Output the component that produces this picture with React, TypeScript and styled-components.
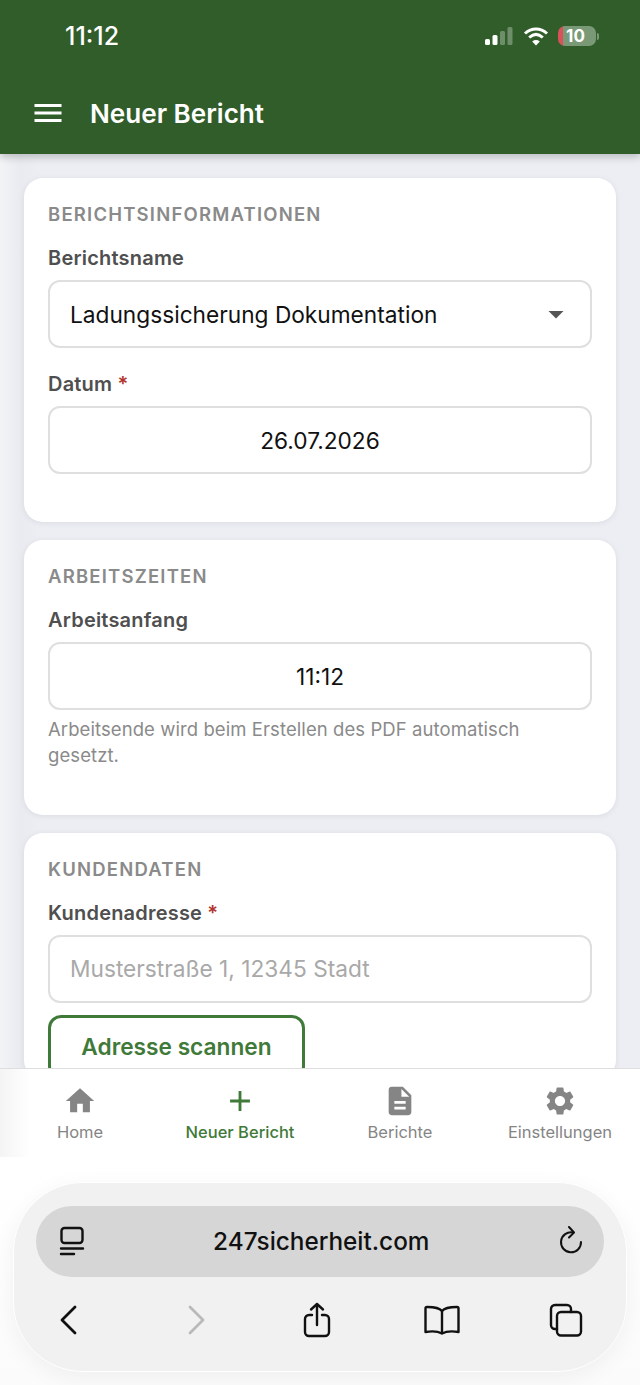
import styled, { createGlobalStyle } from "styled-components";
import { MdAdd, MdArrowDropDown, MdDescription, MdHome, MdMenu, MdSettings } from "react-icons/md";

const GlobalStyle = createGlobalStyle`
  html, body {
    margin: 0;
    padding: 0;
    background: #ffffff;
  }
  * {
    box-sizing: border-box;
  }
`;

const Screen = styled.div`
  color: #111111;
  display: flex;
  flex-direction: column;
  font-family: Inter, "Liberation Sans", sans-serif;
  height: 1385px;
  overflow: hidden;
  width: 640px;
`;

const Header = styled.header`
  background: #305d2a;
  box-shadow: 0 3px 8px rgba(0, 0, 0, 0.22);
  color: #ffffff;
  display: flex;
  flex: none;
  flex-direction: column;
  height: 154px;
  position: relative;
  z-index: 2;
`;

const StatusBar = styled.div`
  align-items: center;
  display: flex;
  height: 72px;
  justify-content: space-between;
  padding: 0 44px 0 65px;
`;

const Clock = styled.span`
  font-size: 25px;
  font-weight: 500;
`;

const StatusIcons = styled.div`
  align-items: center;
  display: flex;
  gap: 9px;
`;

const Battery = styled.div`
  align-items: center;
  background: linear-gradient(90deg, #d9525a 0 5px, #7a9a77 5px);
  border-radius: 7px;
  color: #ffffff;
  display: flex;
  font-size: 17px;
  font-weight: 700;
  height: 20px;
  justify-content: center;
  padding-right: 3px;
  position: relative;
  width: 38px;

  &::after {
    background: #7a9a77;
    border-radius: 0 2px 2px 0;
    content: "";
    height: 7px;
    position: absolute;
    right: -3px;
    top: 6.5px;
    width: 2px;
  }
`;

const TitleRow = styled.div`
  align-items: center;
  display: flex;
  gap: 28px;
  height: 82px;
  padding: 0 0 0 34px;
`;

const MenuIcon = styled(MdMenu)`
  flex: none;
  margin: 0 -4px;
`;

const Title = styled.h1`
  font-size: 26.1px;
  font-weight: 600;
  margin: 0;
`;

const Main = styled.main`
  background: linear-gradient(90deg, #f3f4f6 0, #e9ebf0 20px, #eceef3 40px);
  display: flex;
  flex: 1;
  flex-direction: column;
  gap: 18px;
  min-height: 0;
  overflow: hidden;
  padding: 24px 24px 0;
`;

const Card = styled.section<{ $height?: number }>`
  background: #ffffff;
  border-radius: 19px;
  box-shadow: 0 1px 6px rgba(0, 0, 0, 0.08);
  display: flex;
  flex: none;
  flex-direction: column;
  height: ${(p) => (p.$height ? `${p.$height}px` : "auto")};
  padding: 25px 24px 0;
`;

const CardTitle = styled.h2`
  color: #8a8a8a;
  font-size: 18.5px;
  font-weight: 600;
  letter-spacing: 1.2px;
  line-height: 23px;
  margin: 0 0 21px;
  text-transform: uppercase;
`;

const Label = styled.div`
  color: #4f4f4f;
  font-size: 20px;
  font-weight: 600;
  letter-spacing: 0.2px;
  line-height: 23px;
  margin-bottom: 10px;
`;

const Required = styled.span`
  color: #b3322d;
`;

const Field = styled.div<{ $center?: boolean; $bottom?: number }>`
  align-items: center;
  border: 2px solid #dfdfdf;
  border-radius: 12px;
  display: flex;
  flex: none;
  font-size: 22.7px;
  height: 68px;
  justify-content: ${(p) => (p.$center ? "center" : "space-between")};
  margin-bottom: ${(p) => p.$bottom ?? 0}px;
  padding: 0 20px;
`;

const FieldCaret = styled(MdArrowDropDown)`
  color: #555555;
  margin-right: -4px;
`;

const Placeholder = styled.span`
  color: #a9a9a9;
`;

const Hint = styled.p`
  color: #8a8a8a;
  font-size: 18.5px;
  letter-spacing: 0.08px;
  line-height: 26px;
  margin: 6px 0 0;
`;

const ScanButton = styled.button`
  background: #ffffff;
  border: 3px solid #3f7a39;
  border-radius: 13px;
  color: #3f7a39;
  flex: none;
  font-family: inherit;
  font-size: 22.7px;
  font-weight: 600;
  height: 64px;
  margin-top: 12px;
  padding: 0;
  width: 257px;
`;

const BottomNav = styled.nav`
  background: linear-gradient(90deg, #f4f4f4 0, #ffffff 30px);
  border-top: 1px solid #dedede;
  display: grid;
  flex: none;
  grid-template-columns: repeat(4, 1fr);
  height: 89px;
  position: relative;
  z-index: 2;
`;

const NavItem = styled.div<{ $active?: boolean }>`
  align-items: center;
  color: ${(p) => (p.$active ? "#3f7a39" : "#858585")};
  display: flex;
  flex-direction: column;
  font-size: 16.5px;
  font-weight: ${(p) => (p.$active ? 500 : 400)};
  gap: 4px;
  padding-top: 15px;
  white-space: nowrap;
`;

const BrowserArea = styled.div`
  background: linear-gradient(#ffffff, #fbfbfb);
  flex: none;
  height: 228px;
  padding: 25px 13px 13px 12.5px;
`;

const BrowserPanel = styled.div`
  background: #f1f1f1;
  border: 1.5px solid #ffffff;
  border-radius: 70px;
  box-shadow: 0 6px 22px rgba(0, 0, 0, 0.05);
  display: flex;
  flex-direction: column;
  height: 190px;
  padding: 22.5px 22px 0;
`;

const UrlBar = styled.div`
  align-items: center;
  background: #d6d6d6;
  border-radius: 36px;
  display: flex;
  flex: none;
  font-size: 24.3px;
  font-weight: 500;
  height: 71px;
  justify-content: space-between;
  padding: 0 20px 0 23px;
`;

const BrowserTools = styled.div`
  align-items: center;
  display: flex;
  height: 86px;
  justify-content: space-between;
  padding: 0 18px 0 13px;
`;

const ToolSlot = styled.div<{ $muted?: boolean }>`
  color: ${(p) => (p.$muted ? "#b9b9b9" : "#111111")};
  display: flex;
  justify-content: center;
  width: 40px;
`;

const Glyph = styled.svg`
  display: block;
  fill: none;
  stroke: currentColor;
  stroke-linecap: round;
  stroke-linejoin: round;
`;

export default function App() {
  return (
    <>
      <GlobalStyle />
      <Screen>
        <Header>
          <StatusBar>
            <Clock>11:12</Clock>
            <StatusIcons>
              <svg width="30" height="20" viewBox="0 0 30 20" fill="#ffffff">
                <rect x="1" y="13" width="5" height="6" rx="1.5" />
                <rect x="8.5" y="9" width="5" height="10" rx="1.5" />
                <rect x="16" y="5" width="5" height="14" rx="1.5" opacity="0.3" />
                <rect x="23.5" y="1" width="5" height="18" rx="1.5" opacity="0.3" />
              </svg>
              <svg width="26" height="20" viewBox="0 0 26 20" fill="none" stroke="#ffffff" strokeWidth="3">
                <path d="M2 7.5C8.5 1.5 17.5 1.5 24 7.5" />
                <path d="M6.2 11.5C10.5 7.6 15.5 7.6 19.8 11.5" />
                <path d="M13 19.5L9.2 15.4C11.5 13.6 14.5 13.6 16.8 15.4Z" fill="#ffffff" stroke="none" />
              </svg>
              <Battery>10</Battery>
            </StatusIcons>
          </StatusBar>
          <TitleRow>
            <MenuIcon size={36} />
            <Title>Neuer Bericht</Title>
          </TitleRow>
        </Header>

        <Main>
          <Card $height={344.4}>
            <CardTitle>Berichtsinformationen</CardTitle>
            <Label>Berichtsname</Label>
            <Field $bottom={25}>
              Ladungssicherung Dokumentation
              <FieldCaret size={36} />
            </Field>
            <Label>
              Datum <Required>*</Required>
            </Label>
            <Field $center>26.07.2026</Field>
          </Card>

          <Card $height={274.6}>
            <CardTitle>Arbeitszeiten</CardTitle>
            <Label>Arbeitsanfang</Label>
            <Field $center>11:12</Field>
            <Hint>Arbeitsende wird beim Erstellen des PDF automatisch gesetzt.</Hint>
          </Card>

          <Card>
            <CardTitle>Kundendaten</CardTitle>
            <Label>
              Kundenadresse <Required>*</Required>
            </Label>
            <Field>
              <Placeholder>Musterstraße 1, 12345 Stadt</Placeholder>
            </Field>
            <ScanButton>Adresse scannen</ScanButton>
          </Card>
        </Main>

        <BottomNav>
          <NavItem>
            <MdHome size={34} />
            Home
          </NavItem>
          <NavItem $active>
            <MdAdd size={34} />
            Neuer Bericht
          </NavItem>
          <NavItem>
            <MdDescription size={34} />
            Berichte
          </NavItem>
          <NavItem>
            <MdSettings size={34} />
            Einstellungen
          </NavItem>
        </BottomNav>

        <BrowserArea>
          <BrowserPanel>
            <UrlBar>
              <Glyph width="26" height="30" viewBox="0 0 26 30" strokeWidth="2.4">
                <rect x="2.5" y="2" width="21" height="15" rx="3" />
                <path d="M2 22.5h22M2 28h13" />
              </Glyph>
              247sicherheit.com
              <Glyph width="26" height="30" viewBox="0 0 26 30" strokeWidth="2">
                <path d="M15 6.5A10 10 0 1 0 23 16" />
                <path d="M11 1l5 5.500-5 5" />
              </Glyph>
            </UrlBar>
            <BrowserTools>
              <ToolSlot>
                <Glyph width="20" height="32" viewBox="0 0 20 32" strokeWidth="2.8">
                  <path d="M16 3L3 16l13 13" />
                </Glyph>
              </ToolSlot>
              <ToolSlot $muted>
                <Glyph width="26" height="32" viewBox="-6 0 26 32" strokeWidth="2.8">
                  <path d="M4 3l13 13L4 29" />
                </Glyph>
              </ToolSlot>
              <ToolSlot>
                <Glyph width="28" height="36" viewBox="0 0 28 36" strokeWidth="2.4">
                  <path d="M9 13H6a4 4 0 0 0-4 4v13a4 4 0 0 0 4 4h16a4 4 0 0 0 4-4V17a4 4 0 0 0-4-4h-3" />
                  <path d="M14 23V2M8 7.500L14 2l6 5.500" />
                </Glyph>
              </ToolSlot>
              <ToolSlot>
                <Glyph width="36" height="30" viewBox="0 0 36 30" strokeWidth="2.4">
                  <path d="M18 6C15 2.500 10 2 3.500 2H3a1.500 1.500 0 0 0-1.500 1.500V27c5-.8 12-1 16.500 1.500C22.500 26 29.500 26.200 34.500 27V3.500A1.500 1.500 0 0 0 33 2h-.5C26 2 21 2.500 18 6z" />
                  <path d="M18 6v22" />
                </Glyph>
              </ToolSlot>
              <ToolSlot>
                <Glyph width="34" height="34" viewBox="0 0 34 34" strokeWidth="2.4">
                  <rect x="8" y="9" width="24" height="23.500" rx="4" />
                  <path d="M8 26H6a4 4 0 0 1-4-4V6a4 4 0 0 1 4-4h12a4 4 0 0 1 4 4v3" />
                </Glyph>
              </ToolSlot>
            </BrowserTools>
          </BrowserPanel>
        </BrowserArea>
      </Screen>
    </>
  );
}
